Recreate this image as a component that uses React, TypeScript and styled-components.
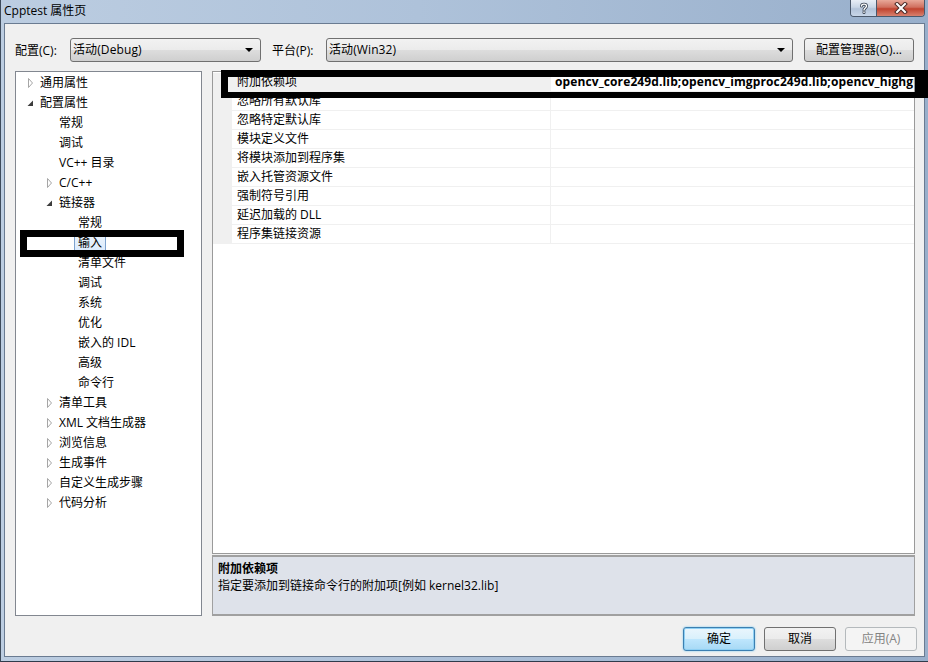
import styled, { createGlobalStyle } from "styled-components";

const GlobalStyle = createGlobalStyle`
  html, body {
    margin: 0;
    padding: 0;
  }
  body {
    font-family: "Open Sans", "Noto Sans CJK SC", sans-serif;
    font-size: 12px;
    color: #000;
  }
`;

const Window = styled.div`
  position: relative;
  width: 928px;
  height: 662px;
  box-sizing: border-box;
  display: flex;
  flex-direction: column;
  padding: 0 3px 4px 3px;
  background: linear-gradient(90deg, #bccde1 0%, #aec2da 45%, #98afcb 100%);
  border-left: 1px solid #3e4b5b;
  border-bottom: 1px solid #2f3b4b;
  overflow: hidden;
`;

const TitleBar = styled.div`
  height: 23px;
  display: flex;
  align-items: flex-start;
  flex-shrink: 0;
`;

const TitleText = styled.div`
  padding: 2px 0 0 0;
  line-height: 17px;
  font-size: 12px;
  color: #000;
`;

const CaptionButtons = styled.div`
  margin-left: auto;
  display: flex;
  height: 16px;
  border: 1px solid #4a586b;
  border-top: none;
  border-radius: 0 0 4px 4px;
  overflow: hidden;
`;

const CaptionButton = styled.div<{ $close?: boolean }>`
  width: ${(p) => (p.$close ? "47px" : "25px")};
  height: 16px;
  display: flex;
  align-items: center;
  justify-content: center;
  background: ${(p) =>
    p.$close
      ? "linear-gradient(180deg, #e8a899 0%, #d0705f 45%, #c0432f 55%, #d8806d 100%)"
      : "linear-gradient(180deg, #e8eef6 0%, #c9d6e6 45%, #b2c3d9 55%, #c8d6e8 100%)"};
  border-left: ${(p) => (p.$close ? "1px solid #4a586b" : "none")};
`;

const Client = styled.div`
  flex: 1;
  display: flex;
  flex-direction: column;
  background: #f0f0f0;
  border: 1px solid #6a7b91;
  min-height: 0;
`;

const Toolbar = styled.div`
  display: flex;
  align-items: center;
  height: 24px;
  padding: 14px 10px 0 10px;
`;

const Label = styled.div<{ $w: number }>`
  width: ${(p) => p.$w}px;
  flex-shrink: 0;
`;

const Combo = styled.div<{ $w?: number }>`
  ${(p) => (p.$w ? `width: ${p.$w}px; flex-shrink: 0;` : "flex: 1;")}
  height: 24px;
  box-sizing: border-box;
  border: 1px solid #707070;
  border-radius: 3px;
  background: linear-gradient(180deg, #f2f2f2 0%, #ebebeb 50%, #dddddd 51%, #cfcfcf 100%);
  display: flex;
  align-items: center;
  padding: 0 7px 0 2px;
  line-height: 16px;
`;

const ComboText = styled.span`
  flex: 1;
  letter-spacing: 0.1px;
`;

const Arrow = styled.span`
  width: 0;
  height: 0;
  border-left: 4px solid transparent;
  border-right: 4px solid transparent;
  border-top: 4px solid #000;
`;

const Spacer = styled.div<{ $w: number }>`
  width: ${(p) => p.$w}px;
  flex-shrink: 0;
`;

const Button = styled.div<{ $w?: number; $kind?: "default" | "normal" | "disabled" }>`
  width: ${(p) => p.$w ?? 72}px;
  height: 24px;
  box-sizing: border-box;
  flex-shrink: 0;
  display: flex;
  align-items: center;
  justify-content: center;
  border-radius: 3px;
  line-height: 16px;
  border: 1px solid
    ${(p) =>
      p.$kind === "default" ? "#3c7fb1" : p.$kind === "disabled" ? "#b4b9bc" : "#707070"};
  color: ${(p) => (p.$kind === "disabled" ? "#838383" : "#000")};
  background: ${(p) =>
    p.$kind === "default"
      ? "linear-gradient(180deg, #eaf6fd 0%, #d9f0fc 50%, #bee6fd 51%, #a7d9f5 100%)"
      : p.$kind === "disabled"
      ? "#f4f4f4"
      : "linear-gradient(180deg, #f2f2f2 0%, #ebebeb 50%, #dddddd 51%, #cfcfcf 100%)"};
  box-shadow: ${(p) =>
    p.$kind === "default" ? "inset 0 0 0 1px #8fd0f4, 0 0 2px #6cc4f0" : "none"};
`;

const Main = styled.div`
  flex: 1;
  display: flex;
  gap: 10px;
  margin: 9px 9px 0 10px;
  min-height: 0;
`;

const Tree = styled.div`
  width: 187px;
  flex-shrink: 0;
  box-sizing: border-box;
  background: #fff;
  border: 1px solid #828790;
  padding-top: 1px;
`;

const TreeItem = styled.div<{ $level: number }>`
  height: 20px;
  display: flex;
  align-items: center;
  padding-left: ${(p) => 8 + p.$level * 19}px;
  line-height: 16px;
  white-space: nowrap;
`;

const Expander = styled.span`
  width: 16px;
  height: 20px;
  flex-shrink: 0;
  display: flex;
`;

const ItemText = styled.span<{ $selected?: boolean }>`
  margin-left: ${(p) => (p.$selected ? "-4px" : "0")};
  padding: ${(p) => (p.$selected ? "1px 3px" : "0")};
  border: ${(p) => (p.$selected ? "1px solid #7da2ce" : "none")};
  border-radius: 2px;
  background: ${(p) =>
    p.$selected ? "linear-gradient(180deg, #ebf4fd 0%, #dbeafc 100%)" : "transparent"};
`;

const RightCol = styled.div`
  flex: 1;
  display: flex;
  flex-direction: column;
  gap: 1px;
  min-width: 0;
`;

const Grid = styled.div`
  flex: 1;
  box-sizing: border-box;
  background: #fff;
  border: 1px solid #9a9a9a;
  padding-top: 1px;
  overflow: hidden;
`;

const Row = styled.div`
  display: grid;
  grid-template-columns: 19px 319px 1fr;
  height: 19px;
`;

const Margin = styled.div`
  background: #f0f0f0;
`;

const NameCell = styled.div<{ $selected?: boolean }>`
  box-sizing: border-box;
  padding-left: 5px;
  line-height: 18px;
  border-bottom: 1px solid #f0f0f0;
  border-right: 1px solid #f0f0f0;
  background: ${(p) => (p.$selected ? "#f0f0f0" : "#fff")};
  white-space: nowrap;
  overflow: hidden;
`;

const ValueCell = styled.div`
  box-sizing: border-box;
  padding-left: 4px;
  line-height: 18px;
  border-bottom: 1px solid #f0f0f0;
  font-weight: bold;
  letter-spacing: 0.12px;
  white-space: nowrap;
  overflow: hidden;
`;

const Desc = styled.div`
  height: 61px;
  flex-shrink: 0;
  box-sizing: border-box;
  background: #dee2ea;
  border: 1px solid #a0a0a0;
  border-top-width: 2px;
  border-bottom-width: 2px;
  padding: 3px 5px;
  line-height: 17px;
`;

const DescTitle = styled.div`
  font-weight: bold;
`;

const Footer = styled.div`
  display: flex;
  justify-content: flex-end;
  gap: 9px;
  padding: 11px 7px 5px 0;
`;

const Redaction = styled.div<{
  $x: number;
  $y: number;
  $w: number;
  $h: number;
  $b: string;
}>`
  position: absolute;
  left: ${(p) => p.$x}px;
  top: ${(p) => p.$y}px;
  width: ${(p) => p.$w}px;
  height: ${(p) => p.$h}px;
  box-sizing: border-box;
  border-style: solid;
  border-color: #000;
  border-width: ${(p) => p.$b};
  pointer-events: none;
`;

type Node = { text: string; level: number; exp?: "open" | "closed"; selected?: boolean };

const treeItems: Node[] = [
  { text: "通用属性", level: 0, exp: "closed" },
  { text: "配置属性", level: 0, exp: "open" },
  { text: "常规", level: 1 },
  { text: "调试", level: 1 },
  { text: "VC++ 目录", level: 1 },
  { text: "C/C++", level: 1, exp: "closed" },
  { text: "链接器", level: 1, exp: "open" },
  { text: "常规", level: 2 },
  { text: "输入", level: 2, selected: true },
  { text: "清单文件", level: 2 },
  { text: "调试", level: 2 },
  { text: "系统", level: 2 },
  { text: "优化", level: 2 },
  { text: "嵌入的 IDL", level: 2 },
  { text: "高级", level: 2 },
  { text: "命令行", level: 2 },
  { text: "清单工具", level: 1, exp: "closed" },
  { text: "XML 文档生成器", level: 1, exp: "closed" },
  { text: "浏览信息", level: 1, exp: "closed" },
  { text: "生成事件", level: 1, exp: "closed" },
  { text: "自定义生成步骤", level: 1, exp: "closed" },
  { text: "代码分析", level: 1, exp: "closed" },
];

const props = [
  { name: "附加依赖项", value: "opencv_core249d.lib;opencv_imgproc249d.lib;opencv_highgui249d.lib;%(AdditionalDependencies)" },
  { name: "忽略所有默认库", value: "" },
  { name: "忽略特定默认库", value: "" },
  { name: "模块定义文件", value: "" },
  { name: "将模块添加到程序集", value: "" },
  { name: "嵌入托管资源文件", value: "" },
  { name: "强制符号引用", value: "" },
  { name: "延迟加载的 DLL", value: "" },
  { name: "程序集链接资源", value: "" },
];

function ExpanderIcon({ kind }: { kind?: "open" | "closed" }) {
  return (
    <Expander>
      {kind === "closed" && (
        <svg width="16" height="20" viewBox="0 0 16 20">
          <polygon points="4.5,5.5 4.5,14.5 8.5,10" fill="#fff" stroke="#a6a6a6" strokeWidth="1" />
        </svg>
      )}
      {kind === "open" && (
        <svg width="16" height="20" viewBox="0 0 16 20">
          <polygon points="9,7.5 9,13 3.5,13" fill="#3c3c3c" />
        </svg>
      )}
    </Expander>
  );
}

export default function App() {
  return (
    <>
      <GlobalStyle />
      <Window>
        <TitleBar>
          <TitleText>Cpptest 属性页</TitleText>
          <CaptionButtons>
            <CaptionButton>
              <svg width="10" height="12" viewBox="0 0 10 12">
                <path
                  d="M2.5 4 C2.5 1.5 7.5 1.5 7.5 4 C7.5 6 5 6 5 8 M5 10 L5 10.6"
                  fill="none"
                  stroke="#3b4656"
                  strokeWidth="3"
                  strokeLinecap="round"
                />
                <path
                  d="M2.5 4 C2.5 1.5 7.5 1.5 7.5 4 C7.5 6 5 6 5 8 M5 10 L5 10.6"
                  fill="none"
                  stroke="#fff"
                  strokeWidth="1.4"
                  strokeLinecap="round"
                />
              </svg>
            </CaptionButton>
            <CaptionButton $close>
              <svg width="14" height="12" viewBox="0 0 14 12">
                <path d="M3 2 L11 10 M11 2 L3 10" stroke="#4a2a26" strokeWidth="4" strokeLinecap="square" />
                <path d="M3 2 L11 10 M11 2 L3 10" stroke="#fff" strokeWidth="2" strokeLinecap="square" />
              </svg>
            </CaptionButton>
          </CaptionButtons>
        </TitleBar>
        <Client>
          <Toolbar>
            <Label $w={55}>配置(C):</Label>
            <Combo $w={191}>
              <ComboText>活动(Debug)</ComboText>
              <Arrow />
            </Combo>
            <Spacer $w={11} />
            <Label $w={54}>平台(P):</Label>
            <Combo>
              <ComboText>活动(Win32)</ComboText>
              <Arrow />
            </Combo>
            <Spacer $w={11} />
            <Button $w={110}>配置管理器(O)...</Button>
          </Toolbar>
          <Main>
            <Tree>
              {treeItems.map((n, i) => (
                <TreeItem key={i} $level={n.level}>
                  <ExpanderIcon kind={n.exp} />
                  <ItemText $selected={n.selected}>{n.text}</ItemText>
                </TreeItem>
              ))}
            </Tree>
            <RightCol>
              <Grid>
                {props.map((p, i) => (
                  <Row key={i}>
                    <Margin />
                    <NameCell $selected={i === 0}>{p.name}</NameCell>
                    <ValueCell>{p.value}</ValueCell>
                  </Row>
                ))}
              </Grid>
              <Desc>
                <DescTitle>附加依赖项</DescTitle>
                <div>指定要添加到链接命令行的附加项[例如 kernel32.lib]</div>
              </Desc>
            </RightCol>
          </Main>
          <Footer>
            <Button $kind="default">确定</Button>
            <Button>取消</Button>
            <Button $kind="disabled">应用(A)</Button>
          </Footer>
        </Client>
        <Redaction $x={19} $y={230} $w={164} $h={27} $b="7px" />
        <Redaction $x={220} $y={70} $w={707} $h={28} $b="7px 13px 6px 7px" />
      </Window>
    </>
  );
}
